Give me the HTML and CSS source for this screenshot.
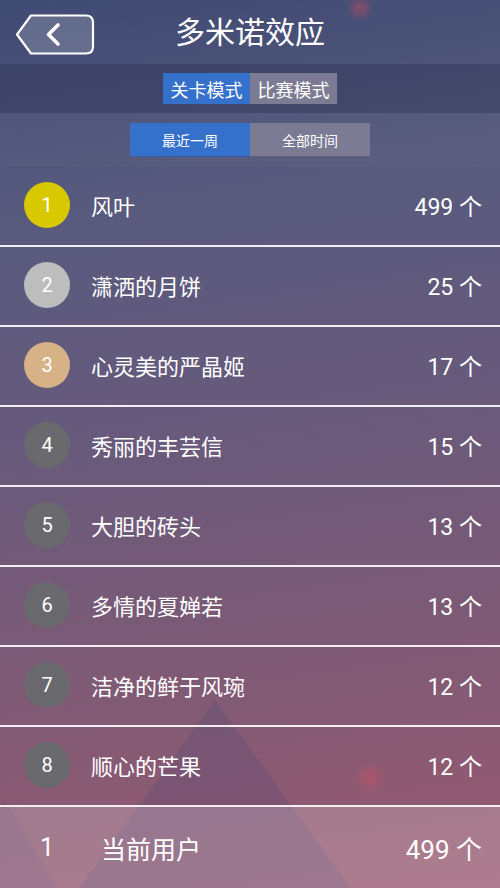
FILE: index.html
```html
<!DOCTYPE html>
<html lang="zh">

<head>
    <meta charset="UTF-8" />
    <meta name="viewport" content="width=device-width, initial-scale=1.0" />
    <title>多米诺效应</title>
    <link rel="stylesheet" href="styles.css">
</head>

<body>
    <div class="page">
        <div class="bg-peak"></div>
        <div class="bg-peak small"></div>

        <header class="topbar">
            <a class="back-btn" href="#">
                <svg width="80" height="43" viewBox="0 0 80 43">
                    <path d="M2 21.5 L16 2.5 H71 Q78 2.5 78 9.5 V33.5 Q78 40.5 71 40.5 H16 Z"
                        fill="rgba(255,255,255,0.18)" stroke="#fff" stroke-width="2.2" stroke-linejoin="round" />
                    <polyline points="43,12 33.5,21.5 43,31" fill="none" stroke="#fff" stroke-width="3.6"
                        stroke-linecap="round" stroke-linejoin="round" />
                </svg>
            </a>
            <h1>多米诺效应</h1>
        </header>

        <div class="mode-bar">
            <div class="tabs mode-tabs">
                <span class="tab active">关卡模式</span>
                <span class="tab">比赛模式</span>
            </div>
        </div>

        <div class="time-bar">
            <div class="tabs time-tabs">
                <span class="tab active">最近一周</span>
                <span class="tab">全部时间</span>
            </div>
        </div>

        <ul class="rank-list" id="rankList">
            <!-- rows go here -->
        </ul>

        <div class="me-row">
            <span class="me-rank">1</span>
            <span class="me-name">当前用户</span>
            <span class="me-count">499 个</span>
        </div>
    </div>

    <script>
        const ranking = [
            { name: "风叶", count: 499 },
            { name: "潇洒的月饼", count: 25 },
            { name: "心灵美的严晶姬", count: 17 },
            { name: "秀丽的丰芸信", count: 15 },
            { name: "大胆的砖头", count: 13 },
            { name: "多情的夏婵若", count: 13 },
            { name: "洁净的鲜于风琬", count: 12 },
            { name: "顺心的芒果", count: 12 },
        ];

        const medals = ["gold", "silver", "bronze"];
        const list = document.getElementById("rankList");

        ranking.forEach((item, i) => {
            const li = document.createElement("li");
            li.className = "rank-row";

            const badge = document.createElement("span");
            badge.className = "badge " + (medals[i] || "plain");
            badge.textContent = i + 1;

            const name = document.createElement("span");
            name.className = "name";
            name.textContent = item.name;

            const count = document.createElement("span");
            count.className = "count";
            count.textContent = item.count + " 个";

            li.append(badge, name, count);
            list.appendChild(li);
        });
    </script>
</body>

</html>
```

FILE: styles.css
```css
* {
    box-sizing: border-box;
}

html,
body {
    margin: 0;
    padding: 0;
}

body {
    font-family: Roboto, "Noto Sans CJK SC", sans-serif;
    color: #fff;
    background-color: #5a5878;
}

.page {
    position: relative;
    width: 500px;
    height: 888px;
    overflow: hidden;
    background:
        radial-gradient(circle at 360px 8px, rgba(200, 80, 100, 0.5) 0, rgba(200, 80, 100, 0) 14px),
        radial-gradient(circle at 370px 778px, rgba(210, 80, 100, 0.45) 0, rgba(210, 80, 100, 0) 16px),
        linear-gradient(172deg, #3f4a72 0%, #575a7e 22%, #665a7c 45%, #7a5a76 68%, #8e5a72 88%, #9a5c72 100%);
}

/* faint mountain shapes behind the list */
.bg-peak {
    position: absolute;
    left: 35px;
    top: 700px;
    width: 360px;
    height: 250px;
    background: rgba(70, 70, 120, 0.22);
    clip-path: polygon(50% 0, 100% 100%, 0 100%);
}

.bg-peak.small {
    left: -60px;
    top: 800px;
    width: 130px;
    height: 110px;
    background: rgba(70, 70, 120, 0.15);
}

.topbar {
    position: relative;
    height: 64px;
    display: flex;
    align-items: center;
    justify-content: center;
}

.back-btn {
    position: absolute;
    left: 15px;
    top: 13px;
    display: block;
    width: 80px;
    height: 43px;
}

.back-btn svg {
    display: block;
}

h1 {
    margin: 0;
    font-size: 30px;
    font-weight: normal;
    line-height: 1;
    padding-top: 2px;
}

.mode-bar {
    position: relative;
    height: 49px;
    padding-top: 9px;
    background: rgba(20, 22, 50, 0.22);
    display: flex;
    justify-content: center;
}

.time-bar {
    position: relative;
    height: 54px;
    padding-top: 10px;
    background: rgba(255, 255, 255, 0.02);
    display: flex;
    justify-content: center;
}

.tabs {
    display: flex;
}

.tab {
    display: flex;
    align-items: center;
    justify-content: center;
    background-color: #7c7b94;
    color: #fff;
}

.tab.active {
    background-color: #3571cb;
}

.mode-tabs .tab {
    width: 87px;
    height: 31px;
    font-size: 18px;
}

.time-tabs .tab {
    width: 120px;
    height: 34px;
    font-size: 14px;
    border-bottom: 1px solid rgba(60, 60, 90, 0.4);
}

.rank-list {
    position: relative;
    list-style: none;
    margin: 0;
    padding: 0;
}

.rank-row {
    height: 80px;
    display: flex;
    align-items: center;
    padding: 0 18px 2px 24px;
    border-bottom: 2px solid #f2eef2;
}

.badge {
    width: 46px;
    height: 46px;
    border-radius: 50%;
    display: flex;
    align-items: center;
    justify-content: center;
    font-size: 20px;
    flex-shrink: 0;
}

.badge.gold {
    background-color: #d8c800;
}

.badge.silver {
    background-color: #bdbdbd;
}

.badge.bronze {
    background-color: #d6b286;
}

.badge.plain {
    background-color: #6a6a6e;
}

.name {
    margin-left: 21px;
    font-size: 22px;
    flex: 1;
}

.count {
    font-size: 23px;
}

.me-row {
    position: relative;
    height: 81px;
    display: flex;
    align-items: center;
    padding: 0 18px 0 24px;
    background: rgba(255, 255, 255, 0.2);
    font-size: 25px;
}

.me-rank {
    width: 46px;
    text-align: center;
}

.me-name {
    margin-left: 31px;
    flex: 1;
}

.me-count {
    font-size: 26px;
}
```
